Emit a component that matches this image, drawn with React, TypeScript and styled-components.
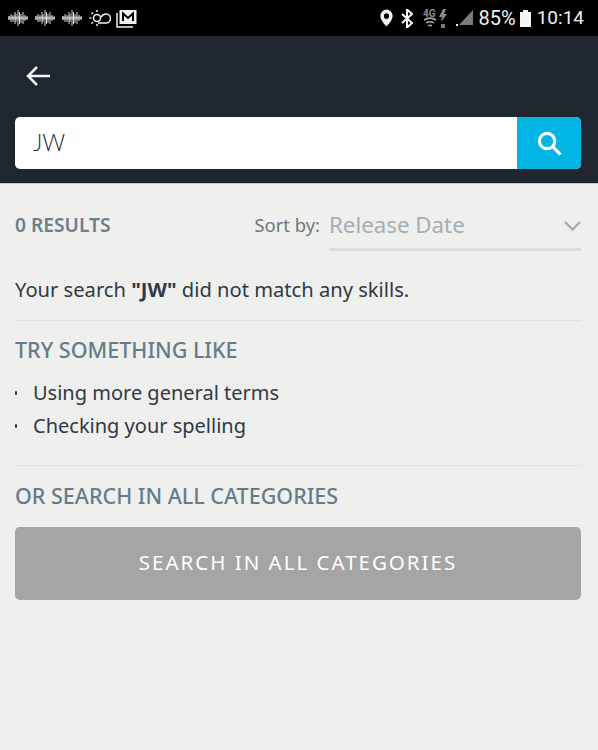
import React from "react";
import styled, { createGlobalStyle } from "styled-components";

const Global = createGlobalStyle`
  html, body { margin: 0; padding: 0; background: #efefed; }
  * { box-sizing: border-box; }
  body { font-family: "Noto Sans", "Open Sans", sans-serif; }
`;

const Page = styled.div`
  width: 598px;
  height: 750px;
  overflow: hidden;
  background: #efefed;
`;

const StatusBar = styled.div`
  height: 36px;
  background: #000;
  display: flex;
  align-items: center;
  justify-content: space-between;
  padding: 0 14px 0 8px;
`;

const StatusGroup = styled.div`
  display: flex;
  align-items: center;
`;

const BatteryText = styled.span`
  font-family: "Roboto", sans-serif;
  color: #f0f0f0;
  font-size: 20px;
  line-height: 24px;
  margin-left: 6px;
`;

const ClockText = styled.span`
  font-family: "Roboto", sans-serif;
  color: #f0f0f0;
  font-size: 19px;
  line-height: 24px;
  margin-left: 6px;
`;

const Header = styled.header`
  height: 148px;
  background: #1f262f;
  border-bottom: 1px solid #c9c9c9;
  padding: 27px 17px 14px 15px;
  display: flex;
  flex-direction: column;
  justify-content: space-between;
`;

const BackButton = styled.div`
  width: 28px;
  height: 26px;
  margin-left: 10px;
  display: flex;
  align-items: center;
`;

const SearchBar = styled.div`
  height: 52px;
  display: flex;
  border-radius: 5px;
  overflow: hidden;
  background: #fff;
`;

const SearchValue = styled.div`
  flex: 1;
  padding-left: 18px;
  font-family: "Lato", sans-serif;
  font-size: 22.5px;
  font-weight: 300;
  color: #232b36;
  line-height: 52px;
`;

const SearchButton = styled.div`
  width: 64px;
  background: #00b4e4;
  display: flex;
  align-items: center;
  justify-content: center;
`;

const Content = styled.main`
  padding: 0 17px 0 15px;
`;

const SortRow = styled.div`
  height: 67px;
  display: flex;
  align-items: flex-start;
  justify-content: space-between;
`;

const ResultCount = styled.div`
  margin-top: 29px;
  font-size: 19.2px;
  line-height: 24px;
  font-weight: 600;
  color: #6c7f8d;
`;

const SortControl = styled.div`
  display: flex;
  align-items: flex-start;
`;

const SortLabel = styled.div`
  margin-top: 28px;
  margin-right: 9px;
  font-size: 18.4px;
  line-height: 26px;
  color: #73777a;
`;

const SortSelect = styled.div`
  width: 252px;
  height: 67px;
  padding: 25px 0 0;
  border-bottom: 3px solid #dddedd;
  display: flex;
  justify-content: space-between;
  font-size: 22.3px;
  line-height: 32px;
  color: #a3aeb6;
`;

const Chevron = styled.svg`
  margin-top: 12px;
`;

const Message = styled.p`
  margin: 0;
  padding-top: 24px;
  height: 70px;
  font-size: 20.15px;
  line-height: 28px;
  color: #2f3945;
  border-bottom: 1px solid #e2e2e0;
  b { font-weight: 700; }
`;

const SectionTitle = styled.h2`
  margin: 0;
  font-size: 21.5px;
  line-height: 28px;
  font-weight: 500;
  color: #667c8b;
`;

const Suggestions = styled.ul`
  margin: 0;
  padding: 15px 0 0;
  list-style: none;
  height: 102px;
  border-bottom: 1px solid #e2e2e0;
`;

const Suggestion = styled.li`
  position: relative;
  padding-left: 18px;
  height: 33px;
  font-size: 20px;
  line-height: 28px;
  color: #2f3945;
  &::before {
    content: "";
    position: absolute;
    left: 0;
    top: 12px;
    width: 2px;
    height: 4px;
    border-radius: 1px;
    background: #2f3945;
  }
`;

const TrySection = styled.section`
  padding-top: 15px;
`;

const OrSection = styled.section`
  padding-top: 16px;
`;

const AllButton = styled.div`
  margin-top: 17px;
  height: 73px;
  padding-bottom: 3px;
  border-radius: 5px;
  background: #a5a5a5;
  color: #fff;
  display: flex;
  align-items: center;
  justify-content: center;
  font-size: 20.5px;
  letter-spacing: 2px;
`;

const Wave = () => (
  <svg width="20" height="18" viewBox="0 0 20 18" style={{ marginRight: 7 }}>
    <path
      d="M1 7v4M3 5v8M5 6v7M7 3v12M8 5v8M10 1v16M11.500 3v12M13 5v9M15 3v12M17 6v6M19 7.500v3"
      stroke="#d8d8d8"
      strokeWidth="1"
    />
    <path d="M0 9h20" stroke="#f0f0f0" strokeWidth="3" opacity=".55" />
  </svg>
);

const Weather = () => (
  <svg width="22" height="18" viewBox="0 0 22 18" fill="none" stroke="#f2f2f2" strokeWidth="1.500" style={{ marginRight: 5 }}>
    <path d="M9 14h8a4.500 4.500 0 0 0 0-9c-2.500 0-4 1.200-4.800 3.200" />
    <circle cx="8" cy="9" r="3.500" />
    <path d="M.5 9h2M2.500 3.500l1.400 1.400M8 1v2M2.500 14.500l1.400-1.400M8 15v2" />
  </svg>
);

const Mail = () => (
  <svg width="21" height="19" viewBox="0 0 21 19" fill="none">
    <path d="M1 4v14h16" stroke="#f2f2f2" strokeWidth="1.500" />
    <rect x="3.500" y="1" width="17" height="14" fill="#f2f2f2" />
    <path d="M7 12V4.500l5 4.500 5-4.500V12" stroke="#000" strokeWidth="2" />
  </svg>
);

const Pin = () => (
  <svg width="13" height="18" viewBox="0 0 15 19" preserveAspectRatio="none" style={{ marginRight: 8 }}>
    <path fillRule="evenodd" fill="#f5f5f5" d="M7.500 0.500a7 7 0 0 1 7 7c0 4-4 8-7 11-3-3-7-7-7-11a7 7 0 0 1 7-7zm0 4a3 3 0 1 0 0 6 3 3 0 0 0 0-6z" />
  </svg>
);

const Bluetooth = () => (
  <svg width="12" height="19" viewBox="0 0 12 19" fill="none" stroke="#f5f5f5" strokeWidth="2" style={{ marginRight: 10 }}>
    <path d="M1 5l10 9-5 4.500V.5l5 4.500L1 14" />
  </svg>
);

const DataIcon = () => (
  <svg width="25" height="19" viewBox="0 0 25 19" style={{ marginRight: 7 }}>
    <text x="0" y="8" fontFamily="Roboto, sans-serif" fontSize="10" fontWeight="700" fill="#8c8c8c">4G</text>
    <path d="M1 11c4-2.500 8-2.500 12 0M3 14c3-2 5-2 8 0M5 17c1.500-1 2.500-1 4 0" stroke="#a8a8a8" strokeWidth="1.500" fill="none" />
    <path d="M20 0l-4 8h3l-1 5 6-8h-3l2-5z" fill="#8c8c8c" />
    <path d="M18 15h4v4h-4z" fill="#777" />
  </svg>
);

const Signal = () => (
  <svg width="18" height="17" viewBox="0 0 18 17">
    <path d="M18 0v15H4z" fill="#7b7b7b" />
    <rect x="1" y="14" width="2" height="2" fill="#f0f0f0" />
  </svg>
);

const Battery = () => (
  <svg width="11" height="17" viewBox="0 0 11 17" style={{ marginLeft: 4 }}>
    <path d="M3 0h5v2h3v15H0V2h3z" fill="#f5f5f5" />
  </svg>
);

export default function App() {
  return (
    <Page>
      <Global />
      <StatusBar>
        <StatusGroup>
          <Wave />
          <Wave />
          <Wave />
          <Weather />
          <Mail />
        </StatusGroup>
        <StatusGroup>
          <Pin />
          <Bluetooth />
          <DataIcon />
          <Signal />
          <BatteryText>85%</BatteryText>
          <Battery />
          <ClockText>10:14</ClockText>
        </StatusGroup>
      </StatusBar>
      <Header>
        <BackButton>
          <svg width="26" height="24" viewBox="0 0 26 24" fill="none" stroke="#f2f2f2" strokeWidth="2.500">
            <path d="M25 12H3M12 3l-9 9 9 9" />
          </svg>
        </BackButton>
        <SearchBar>
          <SearchValue>JW</SearchValue>
          <SearchButton>
            <svg width="25" height="25" viewBox="0 0 26 26" fill="none" stroke="#fff" strokeWidth="3.200">
              <circle cx="10.500" cy="10.500" r="8" />
              <path d="M16.500 16.500l8 8" />
            </svg>
          </SearchButton>
        </SearchBar>
      </Header>
      <Content>
        <SortRow>
          <ResultCount>0 RESULTS</ResultCount>
          <SortControl>
            <SortLabel>Sort by:</SortLabel>
            <SortSelect>
              Release Date
              <Chevron width="17" height="10" viewBox="0 0 17 10" fill="none" stroke="#9fabb3" strokeWidth="2.200">
                <path d="M1 1l7.500 7.500L16 1" />
              </Chevron>
            </SortSelect>
          </SortControl>
        </SortRow>
        <Message>
          Your search <b>"JW"</b> did not match any skills.
        </Message>
        <TrySection>
          <SectionTitle>TRY SOMETHING LIKE</SectionTitle>
          <Suggestions>
            <Suggestion>Using more general terms</Suggestion>
            <Suggestion>Checking your spelling</Suggestion>
          </Suggestions>
        </TrySection>
        <OrSection>
          <SectionTitle>OR SEARCH IN ALL CATEGORIES</SectionTitle>
          <AllButton>SEARCH IN ALL CATEGORIES</AllButton>
        </OrSection>
      </Content>
    </Page>
  );
}
